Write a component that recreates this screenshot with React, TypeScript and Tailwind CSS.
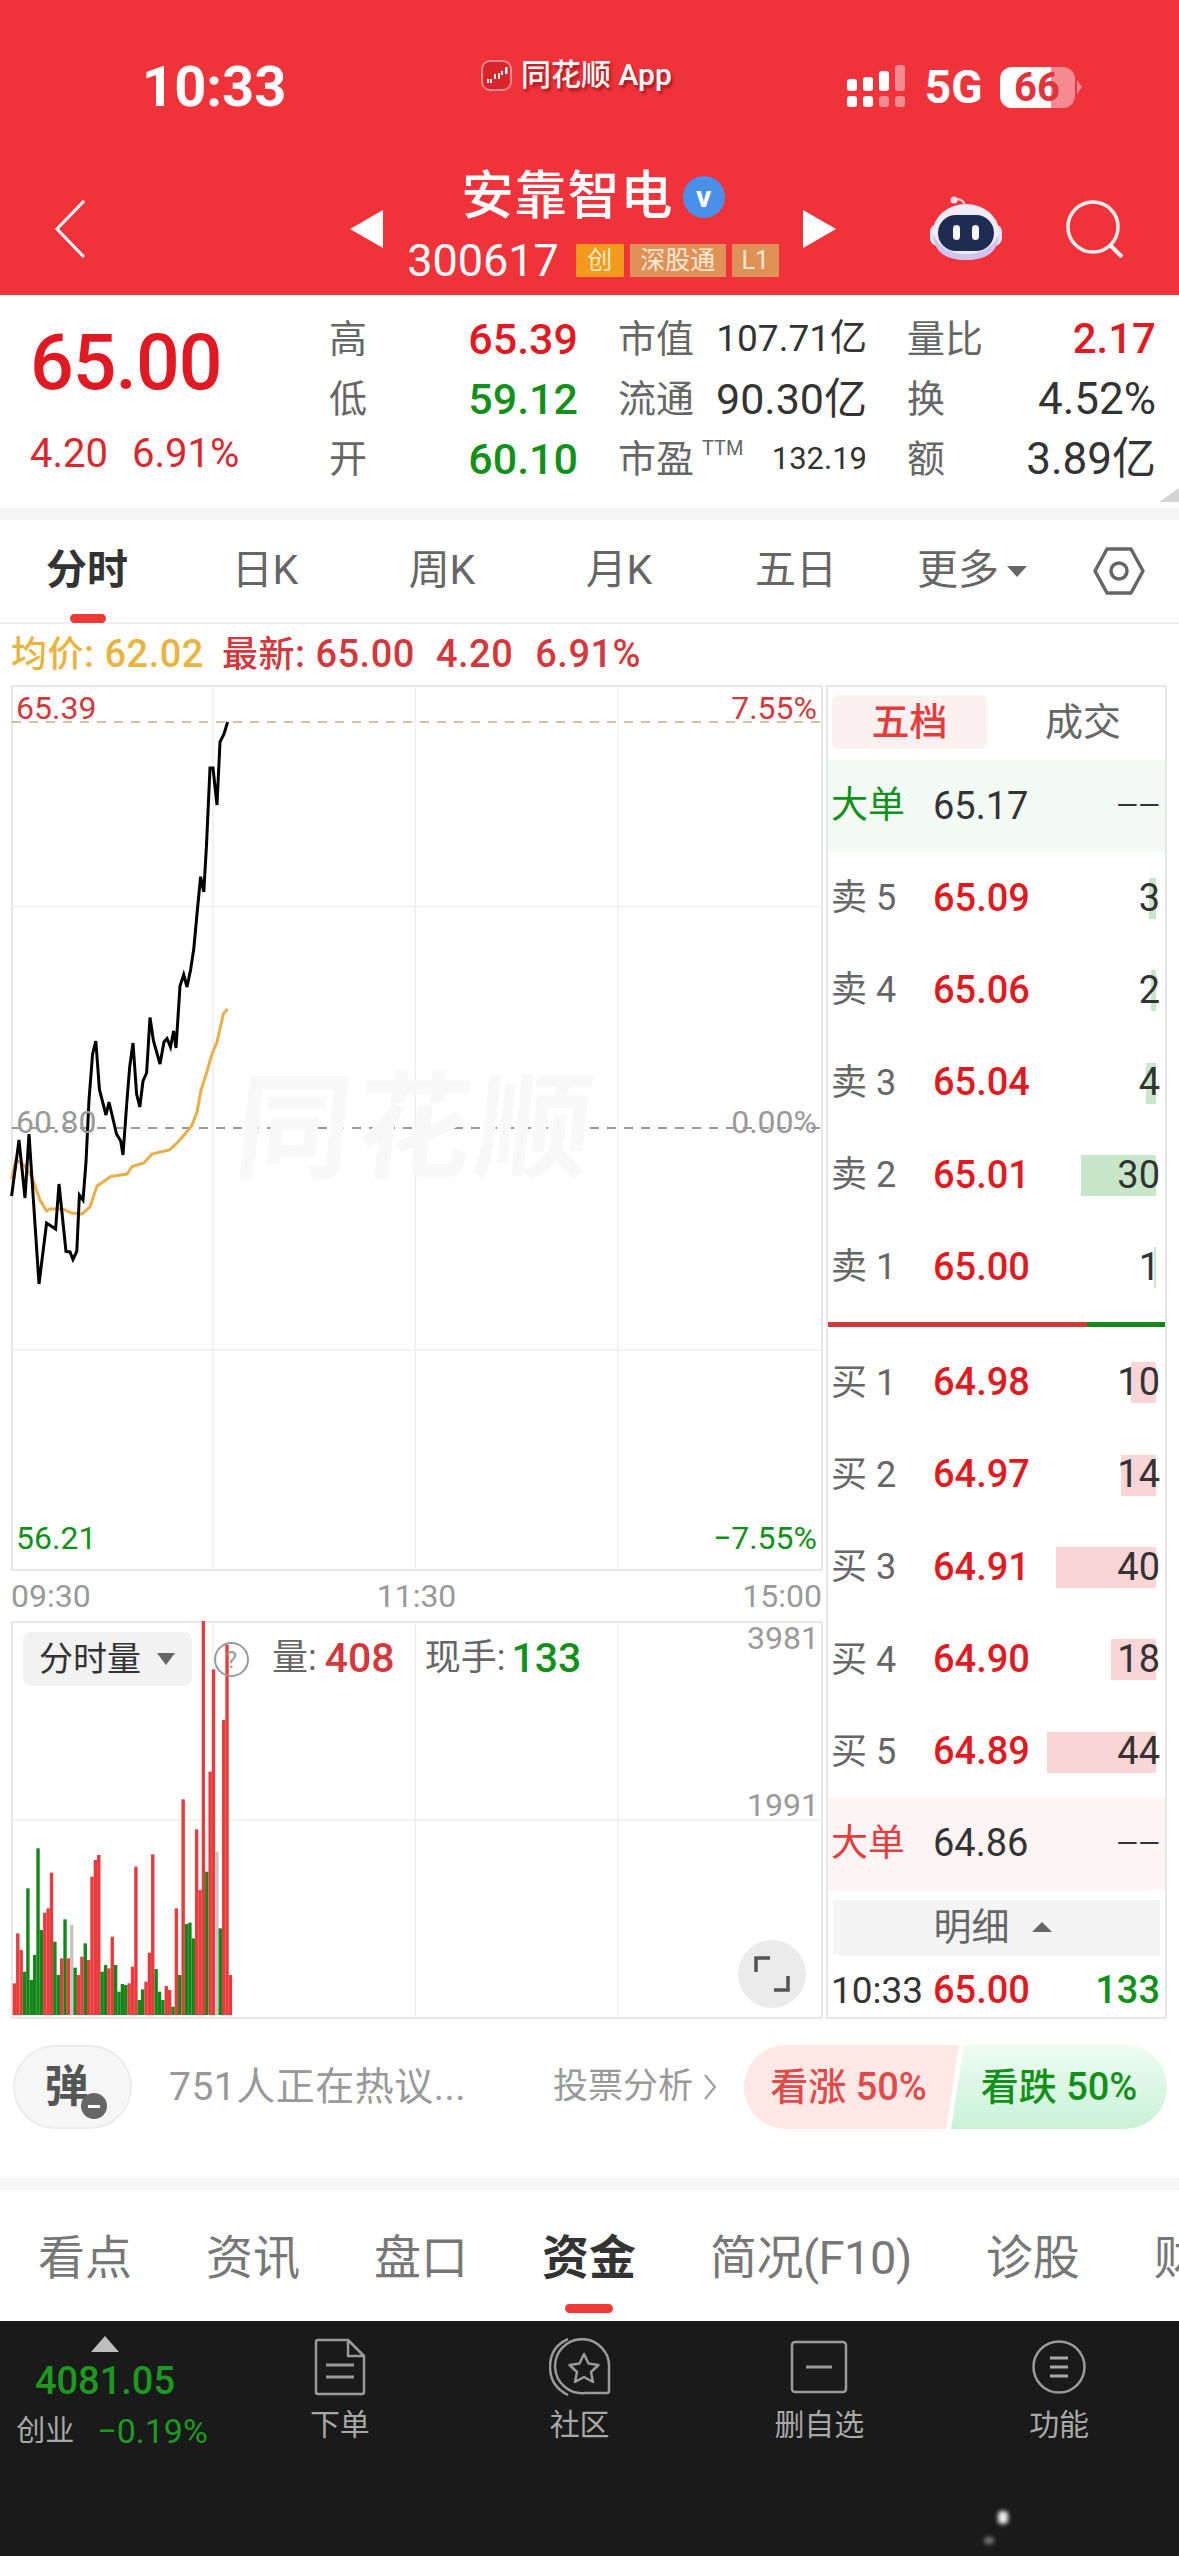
import React from 'react';

const RED = 'text-[#e01a22]';
const GREEN = 'text-[#12911a]';

const stats = [
  [
    { label: '高', value: '65.39', color: RED, size: 'text-[43px] font-medium' },
    { label: '市值', value: '107.71亿', color: 'text-[#333]', size: 'text-[37px]' },
    { label: '量比', value: '2.17', color: RED, size: 'text-[42px] font-medium' },
  ],
  [
    { label: '低', value: '59.12', color: GREEN, size: 'text-[43px] font-medium' },
    { label: '流通', value: '90.30亿', color: 'text-[#333]', size: 'text-[43px]' },
    { label: '换', value: '4.52%', color: 'text-[#333]', size: 'text-[44px]' },
  ],
  [
    { label: '开', value: '60.10', color: GREEN, size: 'text-[43px] font-medium' },
    { label: '市盈', value: '132.19', color: 'text-[#333]', size: 'text-[31px]', ttm: true },
    { label: '额', value: '3.89亿', color: 'text-[#333]', size: 'text-[44px]' },
  ],
];

const sells = [
  { label: '卖 5', price: '65.09', qty: '3', bar: 'w-[7px]' },
  { label: '卖 4', price: '65.06', qty: '2', bar: 'w-[5px]' },
  { label: '卖 3', price: '65.04', qty: '4', bar: 'w-[10px]' },
  { label: '卖 2', price: '65.01', qty: '30', bar: 'w-[75px]' },
  { label: '卖 1', price: '65.00', qty: '1', bar: 'w-[2px]' },
];

const buys = [
  { label: '买 1', price: '64.98', qty: '10', bar: 'w-[25px]' },
  { label: '买 2', price: '64.97', qty: '14', bar: 'w-[35px]' },
  { label: '买 3', price: '64.91', qty: '40', bar: 'w-[100px]' },
  { label: '买 4', price: '64.90', qty: '18', bar: 'w-[45px]' },
  { label: '买 5', price: '64.89', qty: '44', bar: 'w-[109px]' },
];

const pricePath =
  'M11.6 1196 L19 1140 L25 1198 L29 1134 L39 1284 L46.6 1223 L55.6 1229 L59 1184 L66 1251.5 L70 1252 L73 1259.5 L76.8 1251.5 L79.4 1195 L83 1200 L86 1162 L89 1100 L92.6 1054 L95.8 1041 L99.5 1090 L106 1115 L109 1102 L116.5 1134 L120.7 1141 L123 1155 L127 1100 L129.7 1067 L133 1043 L136.6 1094 L139.8 1107 L143 1081 L146.6 1073 L150 1017.5 L153.5 1041 L160 1064 L164 1042 L167 1038.5 L170.5 1047 L173.6 1031 L176 1048 L180 986 L183.7 974.6 L187 987 L190.6 969.7 L193.8 948.6 L197 914 L200.6 876.7 L203.8 892 L206.5 845 L210 768 L213 768 L217 805 L220 742 L224 734 L227.6 722';

const avgPath =
  'M11.6 1179 L16 1160 L24 1165 L32 1177.5 L40 1200 L46.6 1211 L50 1209 L62.5 1209 L71.5 1213 L82 1214 L90 1207 L97 1186 L111 1176.5 L127 1174 L132 1166.5 L144 1163 L152 1154 L169.4 1150 L177 1143 L185 1134 L191.6 1126 L197 1112 L201 1090 L206 1075 L212 1054 L217 1042 L223.4 1013.7 L227.6 1009';

// [top of the bar in zoomed reference units, colour]
const bars: [number, string][] = [
  [1150, 'r'], [1000, 'r'], [1050, 'r'], [1115, 'g'], [865, 'g'], [1140, 'g'], [1065, 'g'], [745, 'g'],
  [990, 'g'], [938, 'r'], [925, 'r'], [818, 'r'], [1025, 'g'], [1125, 'g'], [1075, 'r'], [958, 'g'],
  [1075, 'r'], [975, 'n'], [1103, 'g'], [1125, 'r'], [1070, 'r'], [1030, 'g'], [1080, 'r'], [830, 'r'],
  [780, 'r'], [765, 'r'], [1115, 'g'], [1095, 'g'], [1105, 'r'], [1010, 'r'], [1095, 'g'], [1175, 'g'],
  [1152, 'g'], [1155, 'g'], [1150, 'r'], [1100, 'r'], [800, 'r'], [1200, 'g'], [1168, 'g'], [1145, 'r'],
  [1058, 'r'], [763, 'r'], [1107, 'g'], [1175, 'g'], [1200, 'g'], [1158, 'r'], [1170, 'r'], [1220, 'g'],
  [925, 'r'], [1125, 'g'], [598, 'r'], [972, 'g'], [968, 'g'], [1015, 'g'], [688, 'r'], [870, 'r'],
  [62, 'r'], [815, 'g'], [515, 'r'], [208, 'r'], [755, 'n'], [985, 'g'], [360, 'r'], [135, 'r'], [1125, 'r'],
];

const barColor: Record<string, string> = { r: '#e93a3c', g: '#15861a', n: '#c4c4c4' };

const Robot: React.FC = () => (
  <svg viewBox="0 0 72 66" className="w-[72px] h-[66px]">
    <circle cx="24" cy="4" r="3.5" fill="#f6dbe6" />
    <path d="M26 3 Q34 3 35 10" stroke="#f6dbe6" strokeWidth="2" fill="none" />
    <rect x="0" y="28" width="72" height="22" rx="8" fill="#e9e3f6" />
    <ellipse cx="36" cy="36" rx="33" ry="28" fill="#f0ecfa" />
    <path d="M3 38 Q4 64 36 64 Q68 64 69 38 Q60 58 36 58 Q12 58 3 38Z" fill="#cfc4ef" />
    <rect x="8" y="19" width="56" height="36" rx="18" fill="#1f2c52" />
    <rect x="23" y="29" width="7" height="15" rx="3.5" fill="#f5f5f5" />
    <rect x="42" y="29" width="7" height="15" rx="3.5" fill="#f5f5f5" />
  </svg>
);

const SignalIcon: React.FC = () => (
  <svg viewBox="0 0 60 44" className="w-[60px] h-[44px]">
    <rect x="0" y="14" width="10" height="12" rx="3" fill="#fff" />
    <rect x="16" y="12" width="10" height="14" rx="3" fill="#fff" />
    <rect x="32" y="6" width="10" height="20" rx="3" fill="#fff" />
    <rect x="48" y="0" width="10" height="26" rx="3" fill="#f58a92" />
    <rect x="0" y="31" width="10" height="11" rx="3" fill="#fff" />
    <rect x="16" y="31" width="10" height="11" rx="3" fill="#fff" />
    <rect x="32" y="31" width="10" height="11" rx="3" fill="#f58a92" />
    <rect x="48" y="31" width="10" height="11" rx="3" fill="#f58a92" />
  </svg>
);

const AppLogo: React.FC = () => (
  <svg viewBox="0 0 31 31" className="w-[31px] h-[31px]">
    <rect x="1" y="1" width="29" height="29" rx="8" fill="#d9242c" stroke="#f58a8f" strokeWidth="2" />
    <rect x="6" y="19" width="2" height="4" fill="#fff" />
    <rect x="9" y="19" width="2" height="4" fill="#fff" />
    <rect x="13" y="14" width="2" height="5" fill="#fff" />
    <rect x="17" y="13" width="2" height="6" fill="#fff" />
    <rect x="20" y="11" width="2" height="4" fill="#fff" />
    <rect x="24" y="7" width="2.5" height="7" fill="#fff" />
  </svg>
);

const PanelRow: React.FC<{ label: string; price: string; qty: string; bar: string; barBg: string }> = ({
  label,
  price,
  qty,
  bar,
  barBg,
}) => (
  <div className="relative h-[92.5px] flex items-center pl-[3px] pr-[5px]">
    <div className={`absolute right-[9px] top-[26px] h-[41px] ${bar} ${barBg}`} />
    <span className="relative w-[102px] text-[36px] text-[#666] whitespace-pre">{label}</span>
    <span className="relative text-[38px] font-medium text-[#e01a22]">{price}</span>
    <span className="relative ml-auto text-[38px] text-[#333]">{qty}</span>
  </div>
);

const FootItem: React.FC<{ label: string; children: React.ReactNode }> = ({ label, children }) => (
  <div className="w-[240px] flex flex-col items-center pt-[17px]">
    <div className="h-[58px] flex items-center justify-center">{children}</div>
    <span className="mt-[10px] text-[30px] leading-[38px] text-[#a8a8a8]">{label}</span>
  </div>
);

export default function App() {
  return (
    <div className="w-[1179px] h-[2556px] overflow-hidden bg-white flex flex-col font-['Roboto','Noto_Sans_CJK_SC',sans-serif]">
      {/* red header */}
      <div className="h-[295px] bg-[#f0323b] flex flex-col shrink-0 text-white">
        <div className="h-[165px] flex items-start pl-[142px] pt-[57px]">
          <span className="w-[339px] text-[56px] leading-[60px] font-bold">10:33</span>
          <div className="flex items-center gap-[9px] h-[36px]">
            <AppLogo />
            <span className="text-[30px] leading-[36px] font-medium [text-shadow:2px_3px_3px_rgba(90,0,0,0.5)]">同花顺 App</span>
          </div>
          <div className="ml-[175px] flex items-center h-[60px]">
            <SignalIcon />
            <span className="ml-[18px] text-[46px] font-bold">5G</span>
            <div className="ml-[17px] relative w-[75px] h-[41px] flex">
              <div className="w-[51px] rounded-l-[12px] bg-white" />
              <div className="flex-1 rounded-r-[12px] bg-[#f58a92]" />
              <span className="absolute inset-0 flex items-center justify-center text-[40px] leading-[41px] font-bold text-[#e2323b]">66</span>
            </div>
            <div className="ml-[2px] w-0 h-0 border-y-[7px] border-y-transparent border-l-[5px] border-l-[#f58a92]" />
          </div>
        </div>
        <div className="flex items-center h-[115px] pl-[54px]">
          <svg viewBox="0 0 32 58" className="w-[32px] h-[58px] mt-[12px]">
            <path d="M30 1 L3 29 L30 57" stroke="#fff" strokeWidth="3" fill="none" />
          </svg>
          <div className="ml-[264px] mt-[12px] w-0 h-0 border-y-[19px] border-y-transparent border-r-[33px] border-r-white" />
          <div className="w-[420px] flex flex-col items-center">
            <div className="flex items-center gap-[9px] h-[62px] mt-[-2px]">
              <span className="text-[52px] leading-[62px] font-medium tracking-[1px]">安靠智电</span>
              <div className="w-[42px] h-[42px] rounded-full bg-[#4a90ea] flex items-center justify-center text-[30px] leading-[34px] font-bold">v</div>
            </div>
            <div className="flex items-center mt-[16px] h-[33px]">
              <span className="text-[45px] leading-[33px] mr-[17px]">300617</span>
              <span className="w-[48px] h-[33px] bg-[#f39a1d] flex items-center justify-center text-[25px] text-[#fde9c8]">创</span>
              <span className="ml-[6px] w-[96px] h-[33px] bg-[#df9157] flex items-center justify-center text-[25px] text-[#fde9d4]">深股通</span>
              <span className="ml-[6px] w-[47px] h-[33px] bg-[#df9157] flex items-center justify-center text-[25px] text-[#fde9d4]">L1</span>
            </div>
          </div>
          <div className="mt-[12px] w-0 h-0 border-y-[19px] border-y-transparent border-l-[33px] border-l-white" />
          <div className="ml-[94px] mt-[12px]"><Robot /></div>
          <svg viewBox="0 0 58 58" className="ml-[64px] mt-[12px] w-[58px] h-[58px]">
            <circle cx="27" cy="27" r="25" stroke="#fff" strokeWidth="3.5" fill="none" opacity="0.92" />
            <path d="M45 46 L56 57" stroke="#fff" strokeWidth="4" opacity="0.92" />
          </svg>
        </div>
      </div>

      {/* quote */}
      <div className="relative h-[213px] flex shrink-0">
        <div className="w-[329px] pl-[30px] pt-[29px] flex flex-col">
          <span className="text-[77px] leading-[78px] font-medium text-[#e01a22] tracking-[-1px]">65.00</span>
          <div className="mt-[30px] flex gap-[24px] text-[40px] leading-[44px] text-[#d9272e]">
            <span>4.20</span>
            <span>6.91%</span>
          </div>
        </div>
        <div className="pt-[14px] flex flex-col">
          {stats.map((row, i) => (
            <div key={i} className="h-[60px] flex items-center gap-[40px]">
              {row.map((s, j) => (
                <div key={j} className="w-[249px] flex items-center justify-between">
                  <span className="flex items-start text-[38px] text-[#666]">
                    {s.label}
                    {s.ttm && <span className="ml-[8px] mt-[6px] text-[20px] leading-[22px]">TTM</span>}
                  </span>
                  <span className={`${s.size} ${s.color} leading-[58px]`}>{s.value}</span>
                </div>
              ))}
            </div>
          ))}
        </div>
        <div className="absolute right-0 bottom-[6px] w-0 h-0 border-b-[14px] border-b-[#d4d4d4] border-l-[20px] border-l-transparent" />
      </div>
      <div className="h-[12px] bg-[#f5f5f5] shrink-0" />

      {/* period tabs */}
      <div className="relative h-[104px] shrink-0 flex items-center border-b-2 border-[#eeeeee] text-[41px] text-[#666]">
        <div className="ml-[-2px] w-[178px] text-center font-bold text-[#333]">分时</div>
        <div className="w-[178px] text-center">日K</div>
        <div className="w-[176px] text-center">周K</div>
        <div className="w-[178px] text-center">月K</div>
        <div className="w-[176px] text-center">五日</div>
        <div className="w-[176px] flex items-center justify-center gap-[8px]">
          更多
          <div className="w-0 h-0 border-x-[10px] border-x-transparent border-t-[11px] border-t-[#666]" />
        </div>
        <svg viewBox="0 0 52 52" className="ml-[33px] w-[52px] h-[52px]">
          <path d="M14 4 L38 4 L50 26 L38 48 L14 48 L2 26Z" stroke="#666" strokeWidth="3.5" fill="none" strokeLinejoin="round" />
          <circle cx="26" cy="26" r="8" stroke="#666" strokeWidth="3.5" fill="none" />
        </svg>
        <div className="absolute left-[70px] bottom-[-1px] w-[36px] h-[9px] rounded-full bg-[#ee3b37]" />
      </div>

      {/* average / latest line */}
      <div className="h-[61px] shrink-0 pl-[11px] flex items-center text-[38px] font-medium text-[#d2383c] tracking-[0.5px]">
        <span className="text-[#eab33f]"><span className="text-[36px]">均价</span>: 62.02</span>
        <span className="ml-[18px]"><span className="text-[36px]">最新</span>: 65.00</span>
        <span className="ml-[21px]">4.20</span>
        <span className="ml-[22px]">6.91%</span>
      </div>

      <div className="flex h-[1334px] shrink-0">
        {/* chart column */}
        <div className="w-[826px] shrink-0 flex flex-col">
          <div className="relative h-[886px]">
            <svg viewBox="0 685 826 886" className="w-[826px] h-[886px] block">
              <rect x="12" y="686" width="810" height="884" fill="none" stroke="#e6e6e6" strokeWidth="2" />
              <path d="M213 686 V1570 M415.5 686 V1570 M618 686 V1570 M12 906.5 H822 M12 1350 H822" stroke="#eeeeee" strokeWidth="1.5" />
              <path d="M12 722 H822" stroke="#c9ab84" strokeWidth="1.5" strokeDasharray="9 8" />
              <path d="M12 1128 H822" stroke="#777" strokeWidth="1.5" strokeDasharray="9 8" />
              <path d={avgPath} stroke="#e9ae4a" strokeWidth="3" fill="none" />
              <path d={pricePath} stroke="#000" strokeWidth="3" fill="none" />
            </svg>
            <span className="absolute left-[236px] top-[384px] text-[116px] leading-[120px] font-bold text-[#f8f8f8] -skew-x-6 tracking-[4px]">同花顺</span>
            <span className="absolute left-[16px] top-[6px] text-[32px] leading-[34px] text-[#d2383c]">65.39</span>
            <span className="absolute right-[9px] top-[6px] text-[32px] leading-[34px] text-[#d2383c]">7.55%</span>
            <span className="absolute left-[16px] top-[420px] text-[32px] leading-[34px] text-[#999]">60.80</span>
            <span className="absolute right-[9px] top-[420px] text-[32px] leading-[34px] text-[#999]">0.00%</span>
            <span className="absolute left-[16px] top-[836px] text-[32px] leading-[34px] text-[#12911a]">56.21</span>
            <span className="absolute right-[9px] top-[836px] text-[32px] leading-[34px] text-[#12911a]">−7.55%</span>
          </div>
          <div className="h-[50px] flex items-center justify-between pl-[11px] pr-[4px] text-[32px] text-[#999]">
            <span>09:30</span>
            <span>11:30</span>
            <span>15:00</span>
          </div>
          <div className="relative h-[398px]">
            <svg viewBox="0 1621 826 398" className="w-[826px] h-[398px] block">
              <rect x="12" y="1622" width="810" height="396" fill="none" stroke="#e6e6e6" strokeWidth="2" />
              <path d="M213 1622 V2018 M415.5 1622 V2018 M618 1622 V2018 M12 1820 H822" stroke="#eeeeee" strokeWidth="1.5" />
              {bars.map(([top, c], i) => {
                const y = top / 3 + 1600;
                return <rect key={i} x={12.7 + i * 3.375} y={y} width={3.4} height={2015 - y} fill={barColor[c]} />;
              })}
            </svg>
            <div className="absolute left-[23px] top-[11px] w-[169px] h-[54px] rounded-lg bg-[#f2f2f2] flex items-center pl-[16px] text-[34px] text-[#333]">
              分时量
              <div className="ml-[16px] w-0 h-0 border-x-[9px] border-x-transparent border-t-[12px] border-t-[#666]" />
            </div>
            <div className="absolute left-[214px] top-[21px] w-[35px] h-[35px] rounded-full border-2 border-[#999] flex items-center justify-center text-[24px] text-[#999]">?</div>
            <div className="absolute left-[272px] top-[16px] flex items-center text-[36px] leading-[42px] text-[#666]">
              <span>量:</span>
              <span className="ml-[8px] w-[100px] text-[41px] font-medium text-[#d2383c]">408</span>
              <span>现手:</span>
              <span className="ml-[6px] text-[41px] font-medium text-[#12911a]">133</span>
            </div>
            <span className="absolute right-[7px] top-[0px] text-[32px] leading-[34px] text-[#999]">3981</span>
            <span className="absolute right-[7px] top-[167px] text-[32px] leading-[34px] text-[#999]">1991</span>
            <div className="absolute left-[738px] top-[319px] w-[68px] h-[68px] rounded-full bg-[#ebebeb] flex items-center justify-center">
              <svg viewBox="0 0 36 36" className="w-[36px] h-[36px]">
                <path d="M2 16 V2 H16 M34 20 V34 H20" stroke="#555" strokeWidth="3.5" fill="none" />
              </svg>
            </div>
          </div>
        </div>

        {/* five-level panel */}
        <div className="w-[341px] ml-0 flex flex-col border-x-2 border-y-2 border-[#e6e6e6] h-[1334px] box-border">
          <div className="h-[73px] flex items-start pt-[8px] pl-[4px] text-[38px] shrink-0">
            <div className="w-[155px] h-[54px] rounded-md bg-[#fdf0f0] flex items-center justify-center font-medium text-[#e43d3d]">五档</div>
            <div className="w-[178px] h-[54px] pl-[14px] flex items-center justify-center text-[#666]">成交</div>
          </div>
          <div className="h-[92px] shrink-0 bg-[#f3f9f5] flex items-center pl-[3px] pr-[5px]">
            <span className="w-[102px] text-[37px] text-[#12911a]">大单</span>
            <span className="text-[38px] text-[#333]">65.17</span>
            <span className="ml-auto text-[28px] text-[#333]">——</span>
          </div>
          {sells.map((r) => (
            <PanelRow key={r.label} {...r} barBg="bg-[#c8e6c9]" />
          ))}
          <div className="flex h-[5px] mt-[9px] shrink-0">
            <div className="w-[259px] bg-[#cf3a3a]" />
            <div className="flex-1 bg-[#15861a]" />
          </div>
          <div className="h-[9px] shrink-0" />
          {buys.map((r) => (
            <PanelRow key={r.label} {...r} barBg="bg-[#f9d5d7]" />
          ))}
          <div className="h-[92px] shrink-0 bg-[#fdf5f5] flex items-center pl-[3px] pr-[5px]">
            <span className="w-[102px] text-[37px] text-[#e43d3d]">大单</span>
            <span className="text-[38px] text-[#333]">64.86</span>
            <span className="ml-auto text-[28px] text-[#333]">——</span>
          </div>
          <div className="mx-[5px] mt-[10px] h-[55px] shrink-0 bg-[#f4f4f4] flex items-center justify-center gap-[22px] pr-[8px] text-[38px] text-[#666]">
            明细
            <div className="w-0 h-0 border-x-[10px] border-x-transparent border-b-[10px] border-b-[#666]" />
          </div>
          <div className="h-[62px] pt-[9px] flex items-center pl-[3px] pr-[5px] text-[38px] shrink-0">
            <span className="w-[102px] text-[#333] whitespace-nowrap text-[37px]">10:33</span>
            <span className="font-medium text-[#e01a22]">65.00</span>
            <span className="ml-auto font-medium text-[#12911a]">133</span>
          </div>
        </div>
      </div>

      {/* comment bar */}
      <div className="h-[159px] shrink-0 flex items-start pt-[26px] pl-[13px]">
        <div className="relative w-[119px] h-[84px] rounded-[42px] bg-[#f6f6f6] border-2 border-[#ececec] flex items-center justify-center text-[44px] font-bold text-[#555] pr-[12px]">
          弹
          <div className="absolute left-[66px] top-[46px] w-[26px] h-[26px] rounded-full bg-[#666] flex items-center justify-center">
            <div className="w-[12px] h-[3px] bg-white" />
          </div>
        </div>
        <span className="ml-[37px] w-[384px] h-[84px] flex items-center text-[39px] text-[#999] tracking-[0.5px] whitespace-nowrap">751人正在热议...</span>
        <span className="h-[84px] flex items-center gap-[10px] text-[35px] text-[#999]">
          投票分析
          <svg viewBox="0 0 14 30" className="w-[14px] h-[30px]">
            <path d="M2 3 L12 15 L2 27" stroke="#999" strokeWidth="2" fill="none" />
          </svg>
        </span>
        <div className="ml-[27px] w-[215px] h-[84px] rounded-l-[42px] [clip-path:polygon(0_0,100%_0,94%_100%,0_100%)] bg-[#fde8e6] flex items-center justify-center pr-[6px] text-[38px] font-medium text-[#e04a4a] whitespace-nowrap">
          看涨 50%
        </div>
        <div className="ml-[-8px] w-[216px] h-[84px] rounded-r-[42px] [clip-path:polygon(6%_0,100%_0,100%_100%,0_100%)] bg-gradient-to-b from-[#eefbf2] to-[#c8f2d6] flex items-center justify-center text-[38px] font-medium text-[#12911a] whitespace-nowrap">
          看跌 50%
        </div>
      </div>
      <div className="h-[12px] shrink-0 bg-[#f5f5f5]" />

      {/* info tabs */}
      <div className="relative h-[131px] shrink-0 overflow-hidden flex items-center pl-[38px] pt-[6px] gap-[74px] text-[47px] text-[#777] whitespace-nowrap">
        <span className="shrink-0">看点</span>
        <span className="shrink-0">资讯</span>
        <span className="shrink-0">盘口</span>
        <span className="shrink-0 font-bold text-[#333]">资金</span>
        <span className="shrink-0 tracking-[-0.5px]">简况(F10)</span>
        <span className="shrink-0">诊股</span>
        <span className="shrink-0">财务</span>
        <div className="absolute left-[565px] bottom-[8px] w-[48px] h-[9px] rounded-full bg-[#ee3b37]" />
      </div>

      {/* bottom bar */}
      <div className="relative flex-1 bg-[#1a1a1a] flex">
        <div className="w-[220px] shrink-0 flex flex-col items-center pt-[15px] pr-[4px]">
          <div className="w-0 h-0 border-x-[14px] border-x-transparent border-b-[16px] border-b-[#bdbdbd] ml-[-6px]" />
          <span className="mt-[6px] text-[38px] leading-[46px] font-medium text-[#1c9a1f] ml-[-6px]">4081.05</span>
          <div className="mt-[4px] ml-[8px] flex items-center gap-[23px] leading-[46px]">
            <span className="text-[29px] text-[#a8a8a8]">创业</span>
            <span className="text-[34px] text-[#1c9a1f]">−0.19%</span>
          </div>
        </div>
        <FootItem label="下单">
          <svg viewBox="0 0 52 58" className="w-[52px] h-[58px]">
            <path d="M2 4 Q2 2 4 2 H34 L50 18 V54 Q50 56 48 56 H4 Q2 56 2 54Z M34 2 V18 H50" stroke="#9a9a9a" strokeWidth="2.5" fill="none" strokeLinejoin="round" />
            <path d="M12 27 H40 M12 39 H40" stroke="#9a9a9a" strokeWidth="3" />
          </svg>
        </FootItem>
        <FootItem label="社区">
          <svg viewBox="0 0 62 58" className="w-[62px] h-[58px]">
            <path d="M19 1 Q1 9 1 29 Q1 48 19 57" stroke="#9a9a9a" strokeWidth="2.5" fill="none" />
            <path d="M60 30 V53 Q60 55 58 55 H36 A27 27 0 1 1 60 30Z" stroke="#9a9a9a" strokeWidth="2.5" fill="none" />
            <path d="M35 16 L39.5 25.5 L49.5 27 L42 34 L44 44 L35 39 L26 44 L28 34 L20.5 27 L30.5 25.5Z" stroke="#9a9a9a" strokeWidth="2.5" fill="none" strokeLinejoin="round" />
          </svg>
        </FootItem>
        <FootItem label="删自选">
          <svg viewBox="0 0 58 54" className="w-[58px] h-[54px]">
            <rect x="2" y="2" width="54" height="50" rx="3" stroke="#9a9a9a" strokeWidth="2.5" fill="none" />
            <path d="M16 27 H42" stroke="#9a9a9a" strokeWidth="3" />
          </svg>
        </FootItem>
        <FootItem label="功能">
          <svg viewBox="0 0 54 54" className="w-[54px] h-[54px]">
            <circle cx="27" cy="27" r="25.5" stroke="#9a9a9a" strokeWidth="2.5" fill="none" />
            <path d="M18 18 H36 M18 27 H36 M18 36 H36" stroke="#a8a8a8" strokeWidth="3" />
          </svg>
        </FootItem>
        <div className="absolute left-[998px] top-[190px] w-[10px] h-[13px] rounded-sm bg-[#eeeeee] blur-[2px]" />
        <div className="absolute left-[984px] top-[216px] w-[10px] h-[7px] rounded-sm bg-[#777] blur-[2px]" />
      </div>
    </div>
  );
}
